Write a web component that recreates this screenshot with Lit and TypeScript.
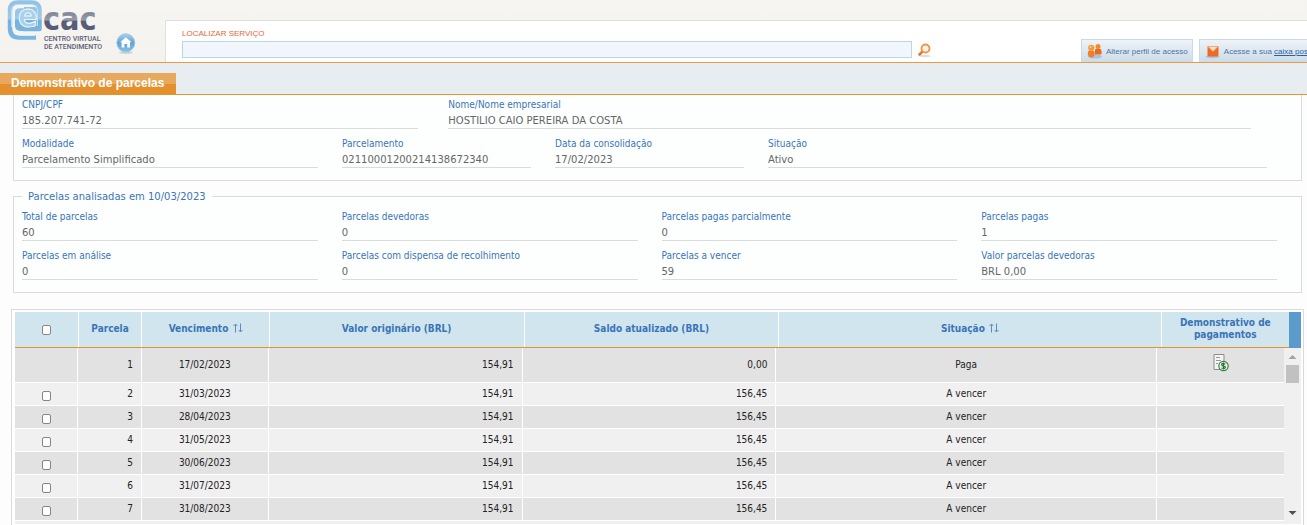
import { LitElement, html, css, svg, nothing } from "lit";
import { customElement, property } from "lit/decorators.js";

interface Field {
  label: string;
  value: string;
}

interface Installment {
  number: number;
  due: string;
  original: string;
  balance: string;
  status: string;
}

const IDENTITY: Field[] = [
  { label: "CNPJ/CPF", value: "185.207.741-72" },
  { label: "Nome/Nome empresarial", value: "HOSTILIO CAIO PEREIRA DA COSTA" },
];

const AGREEMENT: Field[] = [
  { label: "Modalidade", value: "Parcelamento Simplificado" },
  { label: "Parcelamento", value: "02110001200214138672340" },
  { label: "Data da consolidação", value: "17/02/2023" },
  { label: "Situação", value: "Ativo" },
];

const SUMMARY: Field[] = [
  { label: "Total de parcelas", value: "60" },
  { label: "Parcelas devedoras", value: "0" },
  { label: "Parcelas pagas parcialmente", value: "0" },
  { label: "Parcelas pagas", value: "1" },
  { label: "Parcelas em análise", value: "0" },
  { label: "Parcelas com dispensa de recolhimento", value: "0" },
  { label: "Parcelas a vencer", value: "59" },
  { label: "Valor parcelas devedoras", value: "BRL 0,00" },
];

const DUE_DATES = ["31/03/2023", "28/04/2023", "31/05/2023", "30/06/2023", "31/07/2023", "31/08/2023"];

const INSTALLMENTS: Installment[] = [
  { number: 1, due: "17/02/2023", original: "154,91", balance: "0,00", status: "Paga" },
  ...DUE_DATES.map((due, i) => ({
    number: i + 2,
    due,
    original: "154,91",
    balance: "156,45",
    status: "A vencer",
  })),
];

@customElement("ecac-header")
class EcacHeader extends LitElement {
  static styles = css`
    :host {
      display: flex;
      height: 62px;
      background: linear-gradient(#f7f5f1, #f4f2ee);
      border-bottom: 1px solid #f0993a;
      font-family: "Liberation Sans", Arial, sans-serif;
      font-size: 8px;
      overflow: hidden;
    }
    .brand {
      display: flex;
      width: 165px;
      flex: none;
    }
    .logo {
      display: block;
      flex: none;
    }
    .word {
      font: bold 32px "DejaVu Sans Condensed", sans-serif;
    }
    .tagline {
      font: 500 7px Roboto, sans-serif;
      fill: #5b6074;
    }
    .home {
      align-self: flex-end;
      margin: 0 0 7px 9px;
      line-height: 0;
    }
    .panel {
      flex: 1;
      min-width: 0;
      display: flex;
      align-items: flex-end;
      justify-content: space-between;
      margin-top: 20px;
      padding-left: 16px;
      background: #fff;
      border-top: 1px solid #deded8;
      border-left: 1px solid #e2e1dc;
    }
    .search {
      flex: 1;
      display: grid;
      grid-template-columns: 1fr auto;
      column-gap: 5px;
      row-gap: 1px;
      padding-bottom: 4px;
    }
    .search label {
      grid-column: 1 / 3;
      color: #e8663c;
      line-height: 12px;
    }
    .search input {
      box-sizing: border-box;
      width: 100%;
      height: 17px;
      margin: 0;
      padding: 0 4px;
      border: 1px solid #bcd7e4;
      border-radius: 0;
      background: #f0f6fb;
      font: inherit;
      outline: none;
    }
    button {
      border: 0;
      padding: 0;
      background: none;
      font: inherit;
      cursor: pointer;
    }
    .find {
      line-height: 0;
      width: 16px;
      height: 17px;
    }
    .actions {
      display: flex;
      flex: none;
      gap: 6px;
      width: 226px;
      margin-left: 148px;
      overflow: hidden;
    }
    .action {
      box-sizing: border-box;
      flex: none;
      display: flex;
      align-items: center;
      gap: 3px;
      height: 23px;
      padding: 0 4px 0 5px;
      border: 1px solid #c6dbe8;
      border-bottom: 0;
      background: linear-gradient(#eef3f7, #ccdce8);
      color: #4d73a3;
      white-space: nowrap;
    }
    .action a {
      color: #2f5fa3;
    }
  `;

  render() {
    return html`
      <div class="brand">
        <svg class="logo" width="107" height="54" viewBox="0 0 107 54" role="img" aria-label="e-CAC">
          <defs>
            <linearGradient id="blue" gradientUnits="userSpaceOnUse" x1="0" y1="0" x2="0" y2="40">
              <stop offset="0" stop-color="#8fc1e5" />
              <stop offset="0.46" stop-color="#9ccbea" />
              <stop offset="0.52" stop-color="#74b1dd" />
              <stop offset="1" stop-color="#7db7e0" />
            </linearGradient>
            <linearGradient id="slate" gradientUnits="userSpaceOnUse" x1="0" y1="8" x2="0" y2="31">
              <stop offset="0" stop-color="#777d90" />
              <stop offset="0.52" stop-color="#9599a8" />
              <stop offset="0.58" stop-color="#565d76" />
              <stop offset="1" stop-color="#565d76" />
            </linearGradient>
          </defs>
          <path d="M36 37.500H19Q10 37.500 10 28.500V10Q10 2.500 18 2.500H31Q39.500 2.500 39.500 10V29H24Q17 29 17 22"
            fill="none" stroke="url(#blue)" stroke-width="4.500" stroke-linejoin="round" />
          <rect x="15" y="7" width="24" height="24" rx="5" fill="url(#blue)" />
          <path d="M11.500 27V11Q11.500 4.500 18 4.500H31Q37.500 4.500 37.500 10V26" fill="none" stroke="#c3dff2" stroke-width="1" />
          <path d="M35 35H20Q13.500 35 13.500 28V14Q13.500 7.500 20 7.500H24" fill="none" stroke="#f3f6f7" stroke-width="1.500" />
          <text class="word" x="18" y="27" fill="#a9d0ec" stroke="#eef6fb" stroke-width="1">e</text>
          <text class="word" x="43" y="30" fill="url(#slate)">cac</text>
          <text class="tagline" x="44" y="41">CENTRO VIRTUAL</text>
          <text class="tagline" x="44" y="49">DE ATENDIMENTO</text>
        </svg>
        <a class="home" href="#inicio" aria-label="Início">
          <svg width="20" height="22" viewBox="0 0 20 22">
            <defs>
              <linearGradient id="ball" x1="0" y1="0" x2="0" y2="1">
                <stop offset="0" stop-color="#a9d3f0" />
                <stop offset="0.5" stop-color="#5fa3d6" />
                <stop offset="1" stop-color="#86c3ea" />
              </linearGradient>
            </defs>
            <ellipse cx="10" cy="19.500" rx="7" ry="1.500" fill="#d0d2d2" />
            <circle cx="9.800" cy="9.800" r="9" fill="url(#ball)" stroke="#93c0e0" stroke-width="0.800" />
            <path d="M9.800 4.200L15.500 9.200H14V14.500H11.200V11H8.400V14.500H5.600V9.200H4.100Z" fill="#fff" />
          </svg>
        </a>
      </div>
      <div class="panel">
        <div class="search">
          <label for="service">LOCALIZAR SERVIÇO</label>
          <input id="service" type="text" />
          <button class="find" type="button" aria-label="Buscar">
            <svg width="16" height="17" viewBox="0 0 16 17">
              <ellipse cx="8" cy="15" rx="6" ry="1.200" fill="#dedede" />
              <path d="M5.500 10.500L2.500 13.500" stroke="#e37a2a" stroke-width="2.600" stroke-linecap="round" />
              <circle cx="8.500" cy="7.500" r="4" fill="#fdf1e4" stroke="#f09440" stroke-width="1.800" />
              <path d="M6.500 7Q7.300 5.500 9 5.600" stroke="#fff" fill="none" />
            </svg>
          </button>
        </div>
        <div class="actions">
          <button class="action" type="button">
            <svg width="16" height="16" viewBox="0 0 16 16">
              <ellipse cx="8" cy="13.500" rx="7" ry="2" fill="#a9c4d8" />
              <path d="M8 6.500Q11 4.500 14 6.500Q15.500 11 13.500 11.500H8Z" fill="#e9691e" />
              <circle cx="11" cy="3.600" r="2.500" fill="#f28b30" />
              <path d="M1 8.500Q4 6 7.500 8.500Q8.500 14 4.300 14.500Q0 14 1 8.500Z" fill="#f47c22" />
              <circle cx="4.200" cy="4.800" r="3.100" fill="#f59a3c" />
              <circle cx="3.500" cy="4" r="1" fill="#fbd0a0" />
            </svg>
            Alterar perfil de acesso
          </button>
          <div class="action">
            <svg width="16" height="16" viewBox="0 0 16 16">
              <ellipse cx="7.500" cy="13.800" rx="7" ry="1.500" fill="#a9c4d8" />
              <rect x="2.500" y="3" width="11" height="10.500" rx="1" fill="#ee6a22" />
              <path d="M3 3.500H13L8 8.500Z" fill="#fbe3d0" />
              <path d="M3 3.500L8 8.500L13 3.500" fill="none" stroke="#f7a873" />
            </svg>
            <span>Acesse a sua <a href="#caixa-postal">caixa postal</a></span>
          </div>
        </div>
      </div>
    `;
  }
}

@customElement("field-list")
class FieldList extends LitElement {
  @property({ attribute: false }) fields: Field[] = [];
  @property({ reflect: true }) layout = "quarters";

  static styles = css`
    :host {
      display: block;
    }
    dl {
      display: grid;
      margin: 0;
      column-gap: 24px;
      font-size: 10px;
    }
    :host([layout="identity"]) dl {
      grid-template-columns: 396fr 802fr;
      column-gap: 30px;
      padding-right: 50px;
    }
    :host([layout="agreement"]) dl {
      grid-template-columns: 296fr 189fr 189fr 499fr;
      padding-right: 34px;
    }
    :host([layout="quarters"]) dl {
      grid-template-columns: repeat(4, 1fr);
      padding-right: 24px;
    }
    .field {
      min-width: 0;
      height: 30px;
      margin-bottom: 8px;
      border-bottom: 1px solid #dadcda;
    }
    dt {
      font-family: "DejaVu Sans Condensed", Tahoma, sans-serif;
      line-height: 13px;
      color: #3a74b8;
    }
    dd {
      margin: 3px 0 0;
      font-family: "DejaVu Sans", Verdana, sans-serif;
      line-height: 13px;
      color: #666;
    }
  `;

  render() {
    return html`<dl>
      ${this.fields.map((f) => html`<div class="field"><dt>${f.label}</dt><dd>${f.value}</dd></div>`)}
    </dl>`;
  }
}

@customElement("installment-table")
class InstallmentTable extends LitElement {
  @property({ attribute: false }) rows: Installment[] = [];

  static styles = css`
    :host {
      display: block;
      padding: 2px 2px 2px 3px;
      border: 1px solid #dadada;
      border-bottom: 0;
      background: #fff;
      font-family: "DejaVu Sans Condensed", Tahoma, sans-serif;
      font-size: 10px;
    }
    .head,
    .body {
      display: flex;
    }
    table {
      flex: 1;
      min-width: 0;
      table-layout: fixed;
      border-collapse: separate;
      border-spacing: 0;
    }
    .head table {
      border-bottom: 1px solid #e6922e;
    }
    th,
    td {
      box-sizing: border-box;
      padding: 0 8px;
      border-right: 1px solid #fff;
      text-align: center;
      line-height: 12px;
    }
    .narrow {
      width: 5%;
    }
    .medium {
      width: 10%;
    }
    .wide {
      width: 20%;
    }
    .widest {
      width: 30%;
    }
    th {
      height: 35px;
      padding-bottom: 2px;
      background: #d0e5ee;
      color: #3a74b8;
    }
    th:last-child,
    td:last-child {
      border-right: 0;
    }
    .corner {
      width: 12px;
      background: #5b9bcb;
    }
    .sort {
      padding: 0;
      border: 0;
      background: none;
      color: inherit;
      font: inherit;
      cursor: pointer;
      white-space: nowrap;
    }
    .sort svg {
      vertical-align: -1px;
      margin-left: 1px;
    }
    td {
      height: 23px;
      border-bottom: 1px solid #fff;
      color: #222;
      background: #f0f0f0;
    }
    tr:nth-child(odd) td {
      background: #e2e2e2;
    }
    tr:first-child td {
      height: 35px;
    }
    td.num {
      text-align: right;
    }
    input {
      display: block;
      box-sizing: border-box;
      appearance: none;
      width: 9px;
      height: 10px;
      margin: 3px auto 0;
      border: 1px solid #858585;
      border-radius: 2px;
      background: #fff;
    }
    .receipt {
      display: block;
      margin: 0 auto 4px;
      padding: 0;
      border: 0;
      background: none;
      line-height: 0;
      cursor: pointer;
    }
    .body {
      padding-bottom: 3px;
      background: #f0f0f0;
    }
    .bar {
      display: flex;
      flex-direction: column;
      align-items: center;
      width: 17px;
      background: #f0f0f0;
    }
    .thumb {
      width: 13px;
      height: 18px;
      background: #c1c1c1;
    }
    .bar svg {
      flex: none;
      display: block;
    }
    .track {
      flex: 1;
    }
  `;

  private sortable(label: string) {
    return html`<button class="sort" type="button">
      ${label}
      <svg width="10" height="10" viewBox="0 0 10 10" fill="none" stroke="#5c8bc4">
        <path d="M2.500 9.500V1M0.500 3L2.500 1L4.500 3M7.500 0.500V9M5.500 7L7.500 9L9.500 7" />
      </svg>
    </button>`;
  }

  private arrow(d: string, color: string) {
    return html`<svg width="17" height="17" viewBox="0 0 17 17">${svg`<path d=${d} fill=${color} />`}</svg>`;
  }

  private receipt() {
    return html`<button class="receipt" type="button" aria-label="Demonstrativo de pagamentos">
      <svg width="16" height="18" viewBox="0 0 16 18">
        <path d="M1 0.500H11V15.500H1Z" fill="#f4f4f4" stroke="#8c8c8c" />
        <path d="M3 3.500H7M3 6.500H8M3 9.500H5" stroke="#999" />
        <circle cx="10.500" cy="12" r="4.700" fill="#e9f3ea" stroke="#3c8048" stroke-width="1.200" />
        <path d="M12.500 10Q8.500 9 8.700 10.800Q9 12 10.500 12Q12.400 12.200 12.400 13.300Q12 15 8.500 14M10.500 8.500V15.500"
          fill="none" stroke="#2c7239" stroke-width="1.200" />
      </svg>
    </button>`;
  }

  render() {
    return html`
      <div class="head">
        <table>
          <thead>
            <tr>
              <th class="narrow"><input type="checkbox" aria-label="Selecionar todas" /></th>
              <th class="narrow">Parcela</th>
              <th class="medium">${this.sortable("Vencimento")}</th>
              <th class="wide">Valor originário (BRL)</th>
              <th class="wide">Saldo atualizado (BRL)</th>
              <th class="widest">${this.sortable("Situação")}</th>
              <th class="medium">Demonstrativo de pagamentos</th>
            </tr>
          </thead>
        </table>
        <div class="corner"></div>
      </div>
      <div class="body">
        <table>
          <tbody>
            ${this.rows.map(
              (r) => html`<tr>
                <td class="narrow">
                  ${r.status === "Paga"
                    ? nothing
                    : html`<input type="checkbox" aria-label="Selecionar parcela ${r.number}" />`}
                </td>
                <td class="narrow num">${r.number}</td>
                <td class="medium">${r.due}</td>
                <td class="wide num">${r.original}</td>
                <td class="wide num">${r.balance}</td>
                <td class="widest">${r.status}</td>
                <td class="medium">${r.status === "Paga" ? this.receipt() : nothing}</td>
              </tr>`
            )}
          </tbody>
        </table>
        <div class="bar">
          ${this.arrow("M4.500 11L8.500 7L12.500 11Z", "#a3a3a3")}
          <div class="thumb"></div>
          <div class="track"></div>
          ${this.arrow("M4.500 7L8.500 11L12.500 7Z", "#505050")}
        </div>
      </div>
    `;
  }
}

@customElement("app-root")
class AppRoot extends LitElement {
  static styles = css`
    :host {
      display: block;
      height: 100vh;
      overflow: hidden;
      background: #fdfdfd;
    }
    .titlebar {
      display: flex;
      align-items: flex-end;
      height: 31px;
      background: #e8edf2;
      border-bottom: 1px solid #e6922e;
    }
    h1 {
      margin: 0;
      padding: 0 12px 0 11px;
      background: linear-gradient(#e6a95e 50%, #e4902c 50%);
      color: #fff;
      font: bold 12px/21px "Liberation Sans", Arial, sans-serif;
    }
    main {
      padding: 0 5px 0 13px;
    }
    .box {
      margin: 0;
      padding: 3px 0 4px 8px;
      border: 1px solid #dadcda;
      background: #fcfffe;
    }
    .top {
      border-top: 0;
    }
    .analysis {
      min-width: 0;
      margin-top: 9px;
      padding-top: 7px;
    }
    legend {
      padding: 0 6px;
      font: 10px/13px "DejaVu Sans", Verdana, sans-serif;
      color: #3a74b8;
    }
    installment-table {
      margin: 16px -2px 0;
    }
  `;

  render() {
    return html`
      <ecac-header></ecac-header>
      <div class="titlebar"><h1>Demonstrativo de parcelas</h1></div>
      <main>
        <section class="box top">
          <field-list layout="identity" .fields=${IDENTITY}></field-list>
          <field-list layout="agreement" .fields=${AGREEMENT}></field-list>
        </section>
        <fieldset class="box analysis">
          <legend>Parcelas analisadas em 10/03/2023</legend>
          <field-list layout="quarters" .fields=${SUMMARY}></field-list>
        </fieldset>
        <installment-table .rows=${INSTALLMENTS}></installment-table>
      </main>
    `;
  }
}
